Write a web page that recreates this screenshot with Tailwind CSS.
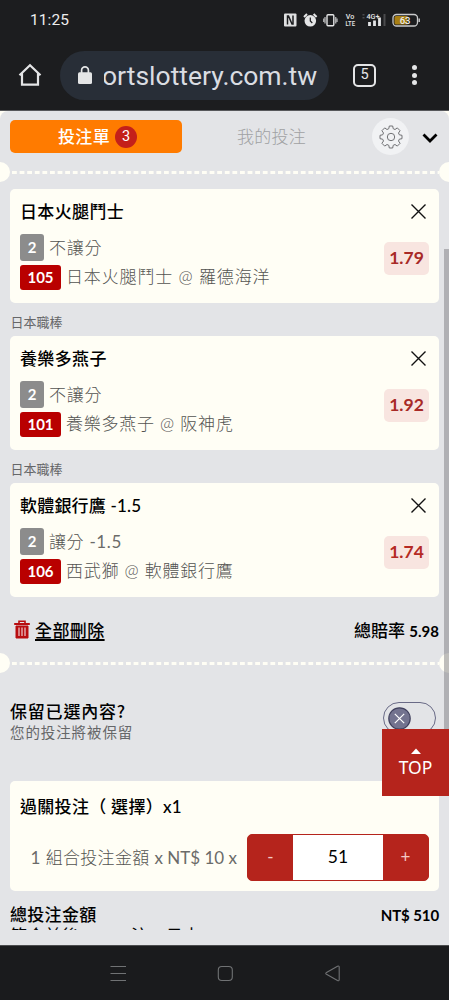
<!DOCTYPE html>
<html lang="zh-Hant">
<head>
<meta charset="utf-8">
<title>投注單</title>
<script src="https://cdn.jsdelivr.net/npm/@tailwindcss/browser@4"></script>
</head>
<body class="w-[449px] h-[1000px] overflow-hidden bg-[#1c1d1f] font-['Lato','Noto_Sans_CJK_TC',sans-serif] text-black whitespace-nowrap">
<div class="flex flex-col h-[1000px]">

  <!-- Status bar -->
  <header class="h-10 shrink-0 flex items-center justify-between pl-[30px] pr-[29px] text-[#eceded]">
    <span class="font-['Roboto',sans-serif] text-[15.5px] tracking-[0.1px] mt-px">11:25</span>
    <svg width="138" height="18" viewBox="282 11 138 18" fill="none" stroke="#e4e5e6" stroke-width="1.4">
      <rect x="284" y="13.500" width="12.500" height="13" rx="1" fill="#dfe0e1" stroke="none"/>
      <path d="M287.500 24.500v-8.500h1l3.500 8h1V15.500" stroke="#1c1d1f" stroke-width="1.500"/>
      <circle cx="310.300" cy="20.800" r="5.800" fill="#e4e5e6" stroke="none"/>
      <path d="M304 17l3-3M316.600 17l-3-3" stroke-width="2"/>
      <path d="M310.300 17.500v3.500l2 2" stroke="#1c1d1f" stroke-width="1.200"/>
      <rect x="327" y="14.700" width="6.800" height="11" rx="1"/>
      <path d="M325 17v6.500M335.800 17v6.500M323.800 18.500v3.500M337 18.500v3.500" stroke-width="1"/>
      <g fill="#e4e5e6" stroke="none" font-family="Roboto, sans-serif" font-weight="500">
        <text x="345.800" y="19.300" font-size="7.500" textLength="8.500" lengthAdjust="spacingAndGlyphs">Vo</text>
        <text x="345.500" y="26" font-size="7.500" textLength="9.500" lengthAdjust="spacingAndGlyphs">LTE</text>
        <text x="366.500" y="18.800" font-size="8" textLength="13" lengthAdjust="spacingAndGlyphs">4G+</text>
      </g>
      <path d="M369.500 22v4M374.500 20.500V26M379.500 17.500V26" stroke-width="2.800"/>
      <path d="M384.500 14v12M363.500 14v1.500M363.500 17v1.500" stroke="#4a4b4d" stroke-width="2"/>
      <rect x="393" y="14.500" width="24.500" height="11.500" rx="3.500" stroke="#c9cacb" stroke-width="1.300"/>
      <path d="M396 16h11.500v8.500H396a1.500 1.500 0 0 1-1.500-1.500v-5.500a1.500 1.500 0 0 1 1.500-1.500z" fill="#a87f14" stroke="none"/>
      <path d="M419.200 18.500v3.500" stroke="#c9cacb"/>
      <text x="399.700" y="23.700" font-size="9.500" font-weight="500" font-family="Roboto, sans-serif" fill="#eceded" stroke="none">63</text>
    </svg>
  </header>

  <!-- Browser toolbar -->
  <div class="h-[70px] shrink-0 flex items-center pl-[18px] pr-[22px]">
    <svg class="-mt-px" width="24" height="24" viewBox="0 0 24 24" fill="none" stroke="#e4e5e6" stroke-width="2.200"><path d="M1.500 12.200L12 2.300l10.500 9.900M4 10.500V21.700h16V10.500"/></svg>
    <div class="ml-[18px] w-[269px] h-[49px] rounded-full bg-[#282e37] flex items-center pl-[18px]">
      <svg width="14" height="18" viewBox="0 0 14 18"><rect y="6.300" width="14" height="11.700" rx="1.500" fill="#e4e5e6"/><path d="M3.600 7V4.300a3.400 3.400 0 0 1 6.800 0V7" fill="none" stroke="#e4e5e6" stroke-width="1.700"/></svg>
      <div class="ml-3 w-[216px] overflow-hidden font-['Roboto',sans-serif] text-[26.5px] leading-[34px] text-[#dadde2] mt-[2px]"><span class="inline-block -ml-[2px]">ortslottery.com.tw</span></div>
    </div>
    <div class="ml-6 size-[23px] rounded-[5px] border-2 border-[#e4e5e6] flex items-center justify-center font-['Roboto',sans-serif] text-[14.500px] text-[#e4e5e6]">5</div>
    <div class="ml-auto mr-[10px] flex flex-col gap-[2.500px]"><i class="size-[5px] rounded-full bg-[#e4e5e6]"></i><i class="size-[5px] rounded-full bg-[#e4e5e6]"></i><i class="size-[5px] rounded-full bg-[#e4e5e6]"></i></div>
  </div>

  <!-- Page -->
  <main class="relative h-[835px] shrink-0 bg-[#fffdf4] border-t border-[#57585b] overflow-hidden">
    <div class="h-[834px] bg-[#e3e4e7] rounded-t-[8px] flex flex-col">
      <div class="h-[51px] shrink-0 flex items-center pl-[10px] pr-[11px]">
        <div class="w-[172px] h-[33px] rounded-[5px] bg-[#ff7b00] text-white flex items-center justify-center gap-[5px] pl-[3px]">
          <span class="text-[17px] tracking-[0.3px] leading-none font-medium">投注單</span>
          <span class="size-[22px] rounded-full bg-[#c4201a] flex items-center justify-center font-['Roboto',sans-serif] text-[14.500px]">3</span>
        </div>
        <div class="w-[179px] text-center text-[17px] tracking-[0.3px] font-light text-[#a0a1a3]">我的投注</div>
        <div class="ml-[11px] size-[37px] rounded-full bg-[#f1f2f4] flex items-center justify-center">
          <svg width="24" height="24" viewBox="0 0 24 24" fill="none" stroke="#707174" stroke-width="1"><circle cx="12" cy="12" r="3.700"/><path d="M10.300 1h3.400l.5 2.700 1.800.8 2.300-1.600 2.800 2.800-1.600 2.300.8 1.800 2.700.5v3.400l-2.700.5-.8 1.800 1.600 2.300-2.800 2.800-2.300-1.600-1.800.8-.5 2.700h-3.400l-.5-2.700-1.800-.8-2.300 1.600-2.800-2.800 1.600-2.300-.8-1.800-2.700-.5v-3.400l2.700-.5.8-1.800-1.600-2.300 2.800-2.800L8 4.500l1.800-.8z" stroke-linejoin="round"/></svg>
        </div>
        <svg class="ml-auto mt-[2px]" width="16" height="10" viewBox="0 0 16 10" fill="none" stroke="#000" stroke-width="2.800"><path d="M1.500 1.500L8 8l6.500-6.500"/></svg>
      </div>

      <div class="h-5 shrink-0 flex items-center justify-between">
        <i class="size-5 rounded-full bg-[#fffef5] -ml-[10px]"></i>
        <svg class="mt-px" width="429" height="3"><path d="M2 1.500H429" stroke="#fffef5" stroke-width="3" stroke-dasharray="4.800 2.800"/></svg>
        <i class="size-5 rounded-full bg-[#fffef5] -mr-[10px]"></i>
      </div>

      <section class="mt-[6.500px] mx-[10px] h-[114px] shrink-0 rounded-[5px] bg-[#fffef5] px-[10px] flex justify-between">
        <div class="flex flex-col">
          <h2 class="mt-[11px] h-6 text-[17px] tracking-[0.35px] leading-6 font-medium">日本火腿鬥士</h2>
          <p class="mt-[10px] h-7 flex items-center gap-[5px]"><b class="w-6 h-[27px] rounded-[3px] bg-[#8c8c8c] text-white text-[15px] flex items-center justify-center">2</b><span class="text-[17px] tracking-[0.75px] leading-6 font-light text-[#535351]">不讓分</span></p>
          <p class="mt-[3px] h-[25px] flex items-center gap-[5px]"><b class="w-[41px] h-[25px] rounded-[3px] bg-[#b90000] text-white text-[15px] flex items-center justify-center">105</b><span class="text-[17px] tracking-[0.85px] leading-6 font-light text-[#535351]">日本火腿鬥士 @ 羅德海洋</span></p>
        </div>
        <div class="flex flex-col items-end">
          <svg class="mt-[15px] mr-[3px]" width="15" height="15" viewBox="0 0 15 15" stroke="#111" stroke-width="1.400"><path d="M.5.500l14 14M14.500.500l-14 14"/></svg>
          <span class="mt-[23.500px] w-[45px] h-[33px] rounded-[5px] bg-[#f8e5e0] text-[#a82a27] text-[17.500px] font-bold flex items-center justify-center">1.79</span>
        </div>
      </section>

      <h3 class="mt-[10px] h-[19px] shrink-0 pl-[10.500px] text-[13px] leading-[19px] text-[#666769]">日本職棒</h3>

      <section class="mt-[4px] mx-[10px] h-[114px] shrink-0 rounded-[5px] bg-[#fffef5] px-[10px] flex justify-between">
        <div class="flex flex-col">
          <h2 class="mt-[11px] h-6 text-[17px] tracking-[0.35px] leading-6 font-medium">養樂多燕子</h2>
          <p class="mt-[10px] h-7 flex items-center gap-[5px]"><b class="w-6 h-[27px] rounded-[3px] bg-[#8c8c8c] text-white text-[15px] flex items-center justify-center">2</b><span class="text-[17px] tracking-[0.75px] leading-6 font-light text-[#535351]">不讓分</span></p>
          <p class="mt-[3px] h-[25px] flex items-center gap-[5px]"><b class="w-[41px] h-[25px] rounded-[3px] bg-[#b90000] text-white text-[15px] flex items-center justify-center">101</b><span class="text-[17px] tracking-[0.75px] leading-6 font-light text-[#535351]">養樂多燕子 @ 阪神虎</span></p>
        </div>
        <div class="flex flex-col items-end">
          <svg class="mt-[15px] mr-[3px]" width="15" height="15" viewBox="0 0 15 15" stroke="#111" stroke-width="1.400"><path d="M.5.500l14 14M14.500.500l-14 14"/></svg>
          <span class="mt-[23.500px] w-[45px] h-[33px] rounded-[5px] bg-[#f8e5e0] text-[#a82a27] text-[17.500px] font-bold flex items-center justify-center">1.92</span>
        </div>
      </section>

      <h3 class="mt-[10px] h-[19px] shrink-0 pl-[10.500px] text-[13px] leading-[19px] text-[#666769]">日本職棒</h3>

      <section class="mt-[4px] mx-[10px] h-[114px] shrink-0 rounded-[5px] bg-[#fffef5] px-[10px] flex justify-between">
        <div class="flex flex-col">
          <h2 class="mt-[11px] h-6 text-[17px] tracking-[0.2px] leading-6 font-medium">軟體銀行鷹 -1.5</h2>
          <p class="mt-[10px] h-7 flex items-center gap-[5px]"><b class="w-6 h-[27px] rounded-[3px] bg-[#8c8c8c] text-white text-[15px] flex items-center justify-center">2</b><span class="text-[17px] tracking-[0.6px] leading-6 font-light text-[#535351]">讓分 <span class="font-normal text-[#6b6b69]">-1.5</span></span></p>
          <p class="mt-[3px] h-[25px] flex items-center gap-[5px]"><b class="w-[41px] h-[25px] rounded-[3px] bg-[#b90000] text-white text-[15px] flex items-center justify-center">106</b><span class="text-[17px] tracking-[0.75px] leading-6 font-light text-[#535351]">西武獅 @ 軟體銀行鷹</span></p>
        </div>
        <div class="flex flex-col items-end">
          <svg class="mt-[15px] mr-[3px]" width="15" height="15" viewBox="0 0 15 15" stroke="#111" stroke-width="1.400"><path d="M.5.500l14 14M14.500.500l-14 14"/></svg>
          <span class="mt-[23.500px] w-[45px] h-[33px] rounded-[5px] bg-[#f8e5e0] text-[#b52a24] text-[17.500px] font-bold flex items-center justify-center">1.74</span>
        </div>
      </section>

      <div class="mt-[21.500px] h-[26px] shrink-0 flex items-center justify-between pl-[14px] pr-[10px]">
        <div class="flex items-center gap-[5px]">
          <svg class="-mt-[3px]" width="16" height="19" viewBox="0 0 16 19" fill="none" stroke="#b80d10"><path d="M.2 4h15.600" stroke-width="2"/><path d="M5 3.500V1.200h6v2.300" stroke-width="1.600"/><path d="M2 6v12h12V6z" fill="#b80d10" stroke-width="1"/><path d="M5 7.500v8.500M8 7.500v8.500M11 7.500v8.500" stroke="#f3dfe0" stroke-width="1.100"/></svg>
          <span class="text-[17px] tracking-[0.4px] leading-6 font-medium underline decoration-[1.500px] underline-offset-[2px]">全部刪除</span>
        </div>
        <span class="text-[17px] leading-6 font-medium">總賠率 <span class="text-[15px] font-bold">5.98</span></span>
      </div>

      <div class="mt-[9px] h-5 shrink-0 flex items-center justify-between">
        <i class="size-5 rounded-full bg-[#fffef5] -ml-[10px]"></i>
        <svg class="mt-px" width="429" height="3"><path d="M2 1.500H429" stroke="#fffef5" stroke-width="3" stroke-dasharray="4.800 2.800"/></svg>
        <i class="size-5 rounded-full bg-[#fffef5] -mr-[10px]"></i>
      </div>

      <div class="mt-[26px] h-[46px] shrink-0 flex justify-between pl-[10px] pr-[13px]">
        <div>
          <p class="text-[17px] tracking-[0.8px] leading-[23px] font-medium">保留已選內容<span class="font-['Noto_Sans_CJK_TC',sans-serif]">?</span></p>
          <p class="text-[14.500px] tracking-[0.9px] leading-5 text-[#666769]">您的投注將被保留</p>
        </div>
        <div class="mt-[3px] w-[53px] h-8 rounded-full border border-[#696a86] flex items-center pl-1">
          <svg width="23" height="23" viewBox="0 0 23 23"><circle cx="11.500" cy="11.500" r="10.700" fill="#73738f" stroke="#42425f" stroke-width="1.200"/><path d="M6.800 6.800l9.400 9.400M16.200 6.800l-9.400 9.400" stroke="#fff" stroke-width="1.200"/></svg>
        </div>
      </div>

      <section class="mt-[36px] mx-[10px] h-[110px] shrink-0 rounded-[5px] bg-[#fffef5] pl-[10px] pr-[10px]">
        <h2 class="pt-[14px] text-[17px] tracking-[0.3px] leading-6 font-medium">過關投注（ 選擇）x1</h2>
        <div class="mt-[15px] h-[47px] flex items-center justify-end">
          <span class="mr-[10px] text-[17px] tracking-[0.3px] leading-6 font-light text-[#535351]"><span class="font-normal text-[#6b6b69]">1</span> 組合投注金額 <span class="font-normal tracking-normal text-[#6b6b69]">x NT$ 10 x</span></span>
          <div class="w-[182px] h-[47px] rounded-[5px] overflow-hidden border border-[#b5241c] bg-[#b5241c] flex items-stretch text-[17px]">
            <span class="w-[45px] flex items-center justify-center text-[#f3c9c4] pb-px">-</span>
            <span class="w-[90px] bg-white flex items-center justify-center text-[17.500px]">51</span>
            <span class="w-[45px] flex items-center justify-center text-[#f3c9c4] pb-px">+</span>
          </div>
        </div>
      </section>

      <div class="mt-3 h-6 shrink-0 flex items-center justify-between px-[10px]">
        <span class="text-[17px] tracking-[0.3px] leading-6 font-medium">總投注金額</span>
        <span class="text-[15px] font-bold tracking-[-0.100px]">NT$ 510</span>
      </div>
      <div class="h-[3px] shrink-0 overflow-hidden pl-[10px]"><p class="-mt-[3px] text-[17px] tracking-[0.3px] leading-6">符合前後　　　注　日本</p></div>
    </div>

    <i class="absolute right-0 top-[138px] w-[5px] h-[480px] bg-[#707175]/45"></i>
    <div class="absolute right-0 top-[618px] w-[67px] h-[67px] bg-[#b5241c] flex flex-col items-center pt-[19px] text-white">
      <svg width="10" height="6" viewBox="0 0 10 6"><path d="M0 6L5 .500 10 6z" fill="#fff"/></svg>
      <span class="mt-[2px] font-['Noto_Sans',sans-serif] text-[17.500px] leading-[22px]">TOP</span>
    </div>
  </main>

  <!-- System navigation -->
  <nav class="flex-1 border-t border-[#4b4c4e] bg-[#1a1b1d] flex items-center justify-center">
    <svg width="240" height="18" viewBox="105 963 240 18" fill="none" stroke="#707274" stroke-width="1.100"><path d="M110.500 965.500h15.500M110.500 972.500h15.500M110.500 979.500h15.500"/><rect x="218.300" y="965.500" width="14" height="14" rx="3.500"/><path d="M326.500 971.500l11-6.200q1.700-.8 1.700 1v12.200q0 1.800-1.700 1l-11-6.200q-1.500-.9 0-1.800z"/></svg>
  </nav>
</div>
</body>
</html>
